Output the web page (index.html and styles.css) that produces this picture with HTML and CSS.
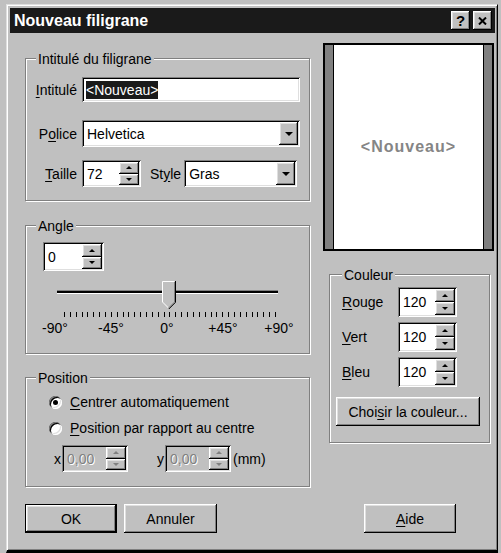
FILE: index.html
```html
<!DOCTYPE html>
<html lang="fr">
<head>
  <meta charset="UTF-8">
  <title>Nouveau filigrane</title>
  <link rel="stylesheet" href="styles.css">
</head>
<body>
  <div class="window">
    <div class="titlebar">
      <span class="title">Nouveau filigrane</span>
      <div class="title-buttons">
        <span class="title-btn raised">?</span>
        <span class="title-btn raised">
          <svg width="9" height="8" viewBox="0 0 9 8"><path d="M1 0.5 L8 7.5 M8 0.5 L1 7.5" stroke="#000" stroke-width="2"/></svg>
        </span>
      </div>
    </div>

    <div class="dialog">
      <div class="col-left">
        <!-- libellé -->
        <div class="group group-label">
          <span class="group-title">Intitulé du filigrane</span>
          <div class="field-row row-name">
            <span class="field-label"><u>I</u>ntitulé</span>
            <div class="edit sunken name-edit"><span class="selected">&lt;Nouveau&gt;</span></div>
          </div>
          <div class="field-row row-font">
            <span class="field-label">P<u>o</u>lice</span>
            <div class="combo sunken font-combo">
              <span class="combo-text">Helvetica</span>
              <span class="combo-btn raised"><span class="arrow-down"></span></span>
            </div>
          </div>
          <div class="field-row row-size">
            <span class="field-label"><u>T</u>aille</span>
            <div class="spin sunken size-spin">
              <span class="spin-text">72</span>
              <span class="spinner">
                <span class="spin-btn raised"><span class="arrow-up"></span></span>
                <span class="spin-btn raised"><span class="arrow-dn"></span></span>
              </span>
            </div>
            <span class="style-label">St<u>y</u>le</span>
            <div class="combo sunken style-combo">
              <span class="combo-text">Gras</span>
              <span class="combo-btn raised"><span class="arrow-down"></span></span>
            </div>
          </div>
        </div>

        <!-- angle -->
        <div class="group group-angle">
          <span class="group-title">Angle</span>
          <div class="spin sunken angle-spin">
            <span class="spin-text">0</span>
            <span class="spinner">
              <span class="spin-btn raised"><span class="arrow-up"></span></span>
              <span class="spin-btn raised"><span class="arrow-dn"></span></span>
            </span>
          </div>
          <div class="slider">
            <div class="track"></div>
            <svg class="thumb" width="14" height="28" viewBox="0 0 14 28">
              <polygon points="0,0 13,0 13,21 6.5,27.5 0,21" fill="#c0c0c0"/>
              <polyline points="0.5,21 0.5,0.5 12.5,0.5" fill="none" stroke="#fff"/>
              <polyline points="0.5,21 6.5,27" fill="none" stroke="#fff"/>
              <polyline points="12.5,1 12.5,21 6.5,27" fill="none" stroke="#808080"/>
              <polyline points="13.5,0 13.5,21.3 6.8,28" fill="none" stroke="#000"/>
            </svg>
          </div>
          <div class="ticks"></div>
          <div class="scale-labels">
            <span>-90°</span><span>-45°</span><span>0°</span><span>+45°</span><span>+90°</span>
          </div>
        </div>

        <!-- position -->
        <div class="group group-position">
          <span class="group-title">Position</span>
          <div class="radio-row first">
            <span class="radio"><span class="dot"></span></span>
            <span class="radio-text"><u>C</u>entrer automatiquement</span>
          </div>
          <div class="radio-row">
            <span class="radio"></span>
            <span class="radio-text"><u>P</u>osition par rapport au centre</span>
          </div>
          <div class="xy-row">
            <span class="axis x-axis">x</span>
            <div class="spin sunken disabled xy-spin">
              <span class="spin-text">0,00</span>
              <span class="spinner">
                <span class="spin-btn raised"><span class="arrow-up"></span></span>
                <span class="spin-btn raised"><span class="arrow-dn"></span></span>
              </span>
            </div>
            <span class="axis y-axis">y</span>
            <div class="spin sunken disabled xy-spin">
              <span class="spin-text">0,00</span>
              <span class="spinner">
                <span class="spin-btn raised"><span class="arrow-up"></span></span>
                <span class="spin-btn raised"><span class="arrow-dn"></span></span>
              </span>
            </div>
            <span class="unit">(mm)</span>
          </div>
        </div>

        <div class="button-row">
          <button class="btn btn-default ok-btn">OK</button>
          <button class="btn cancel-btn">Annuler</button>
        </div>
      </div>

      <div class="col-right">
        <div class="preview">
          <div class="page"><span class="preview-text">&lt;Nouveau&gt;</span></div>
        </div>

        <div class="group group-color">
          <span class="group-title">Couleur</span>
          <div class="color-row first">
            <span class="color-label"><u>R</u>ouge</span>
            <div class="spin sunken color-spin">
              <span class="spin-text">120</span>
              <span class="spinner">
                <span class="spin-btn raised"><span class="arrow-up"></span></span>
                <span class="spin-btn raised"><span class="arrow-dn"></span></span>
              </span>
            </div>
          </div>
          <div class="color-row">
            <span class="color-label"><u>V</u>ert</span>
            <div class="spin sunken color-spin">
              <span class="spin-text">120</span>
              <span class="spinner">
                <span class="spin-btn raised"><span class="arrow-up"></span></span>
                <span class="spin-btn raised"><span class="arrow-dn"></span></span>
              </span>
            </div>
          </div>
          <div class="color-row">
            <span class="color-label"><u>B</u>leu</span>
            <div class="spin sunken color-spin">
              <span class="spin-text">120</span>
              <span class="spinner">
                <span class="spin-btn raised"><span class="arrow-up"></span></span>
                <span class="spin-btn raised"><span class="arrow-dn"></span></span>
              </span>
            </div>
          </div>
          <button class="btn choose-btn">Choi<u>s</u>ir la couleur...</button>
        </div>

        <button class="btn help-btn"><u>A</u>ide</button>
      </div>
    </div>
  </div>
</body>
</html>
```

FILE: styles.css
```css
* {
  margin: 0;
  padding: 0;
  box-sizing: border-box;
}

body {
  width: 501px;
  height: 553px;
  overflow: hidden;
  background: #c0c0c0;
  font-family: "Liberation Sans", Arial, sans-serif;
  font-size: 14px;
  color: #000;
}

u {
  text-decoration: underline;
  text-underline-offset: 2px;
}

/* 3D borders */
.raised {
  background: #c0c0c0;
  box-shadow: inset -1px -1px #000, inset 1px 1px #fff, inset -2px -2px #808080, inset 2px 2px #dfdfdf;
}

.sunken {
  background: #fff;
  box-shadow: inset 1px 1px #808080, inset -1px -1px #fff, inset 2px 2px #000, inset -2px -2px #dfdfdf;
  padding: 2px;
}

/* window frame */
.window {
  margin: 4px 0 0 6px;
  width: 492px;
  height: 549px;
  border: 1px solid;
  border-width: 1px 1px 3px 1px;
  border-color: #dfdfdf #000 #000 #dfdfdf;
  box-shadow: inset 1px 1px #fff, inset -1px -1px #808080;
  padding: 3px 2px 3px 3px;
  display: flex;
  flex-direction: column;
}

.titlebar {
  height: 25px;
  background: #1a1a1a;
  color: #fff;
  display: flex;
  align-items: center;
  justify-content: space-between;
  padding: 0 3px 0 4px;
}

.title {
  font-weight: bold;
  font-size: 16px;
}

.title-buttons {
  display: flex;
  gap: 3px;
}

.title-btn {
  width: 19px;
  height: 19px;
  display: flex;
  align-items: center;
  justify-content: center;
  color: #000;
  font-weight: bold;
  font-size: 15px;
}

.dialog {
  display: flex;
  flex: 1;
  padding-left: 15px;
}

.col-left {
  width: 285px;
  padding-top: 25px;
  display: flex;
  flex-direction: column;
}

.col-right {
  width: 171px;
  margin-left: 13px;
  padding-top: 10px;
  display: flex;
  flex-direction: column;
}

/* group boxes */
.group {
  border: 1px solid #808080;
  box-shadow: inset 1px 1px #fff, 1px 1px #fff;
  display: flex;
  flex-direction: column;
}

.group-title {
  align-self: flex-start;
  margin: -8px 0 -8px 10px;
  padding: 0 2px;
  line-height: 16px;
  background: #c0c0c0;
}

.field-row {
  display: flex;
  align-items: center;
}

.field-label {
  width: 51px;
  margin-right: 5px;
  text-align: right;
}

.group-label {
  height: 143px;
}

.row-name {
  margin-top: 18px;
}

.row-font {
  margin-top: 18px;
}

.row-size {
  margin-top: 13px;
}

.edit {
  display: flex;
  align-items: center;
  padding-left: 4px;
}

.name-edit {
  width: 218px;
  height: 25px;
}

.selected {
  background: #1a1a1a;
  color: #fff;
  line-height: 18px;
}

.combo {
  display: flex;
}

.combo-text {
  flex: 1;
  display: flex;
  align-items: center;
  padding-left: 3px;
}

.combo-btn {
  width: 19px;
  display: flex;
  align-items: center;
  justify-content: center;
}

.font-combo {
  width: 218px;
  height: 27px;
}

.style-combo {
  width: 113px;
  height: 27px;
}

.style-label {
  margin: 0 3px 0 9px;
}

.arrow-down {
  border-left: 4px solid transparent;
  border-right: 4px solid transparent;
  border-top: 4px solid #000;
}

/* spin boxes */
.spin {
  display: flex;
}

.spin-text {
  flex: 1;
  display: flex;
  align-items: center;
  padding-left: 3px;
}

.spinner {
  width: 20px;
  display: flex;
  flex-direction: column;
}

.spin-btn {
  flex: 1;
  display: flex;
  align-items: center;
  justify-content: center;
}

.arrow-up {
  border-left: 3px solid transparent;
  border-right: 3px solid transparent;
  border-bottom: 3px solid #000;
}

.arrow-dn {
  border-left: 3px solid transparent;
  border-right: 3px solid transparent;
  border-top: 3px solid #000;
}

.size-spin {
  width: 59px;
  height: 27px;
}

/* angle */
.group-angle {
  margin-top: 24px;
  height: 129px;
}

.angle-spin {
  margin: 16px 0 0 17px;
  width: 61px;
  height: 29px;
}

.slider {
  position: relative;
  margin: 10px 0 0 31px;
  width: 221px;
  height: 28px;
}

.track {
  margin-top: 9px;
  height: 4px;
  background: #000;
  border-top: 1px solid #808080;
  border-bottom: 1px solid #fff;
}

.thumb {
  position: absolute;
  left: 105px;
  top: 0;
}

.ticks {
  margin: 3px 0 0 38px;
  width: 212px;
  height: 5px;
  background: repeating-linear-gradient(90deg, #000 0 1px, transparent 1px 5.86px);
}

.scale-labels {
  display: grid;
  grid-template-columns: repeat(5, 56px);
  margin: 3px 0 0 1px;
  line-height: 16px;
  text-align: center;
}

/* position */
.group-position {
  margin-top: 23px;
  height: 110px;
}

.radio-row {
  display: flex;
  align-items: center;
  height: 16px;
  margin-top: 10px;
  padding-left: 23px;
}

.radio-row.first {
  margin-top: 16px;
}

.radio {
  width: 13px;
  height: 13px;
  border-radius: 50%;
  background: #fff;
  box-shadow: inset 1px 1px #808080, inset -1px -1px #fff, inset 2px 2px #000, inset -2px -2px #dfdfdf;
  display: flex;
  align-items: center;
  justify-content: center;
}

.dot {
  width: 5px;
  height: 5px;
  border-radius: 50%;
  background: #000;
}

.radio-text {
  margin-left: 8px;
}

.xy-row {
  display: flex;
  align-items: center;
  margin-top: 9px;
}

.x-axis {
  margin-left: 28px;
  width: 8px;
}

.y-axis {
  margin-left: 29px;
  width: 8px;
}

.xy-spin {
  width: 66px;
  height: 27px;
}

.spin.disabled {
  background: #c0c0c0;
}

.disabled .spin-text {
  color: #808080;
  text-shadow: 1px 1px #fff;
}

.disabled .arrow-up {
  border-bottom-color: #808080;
}

.disabled .arrow-dn {
  border-top-color: #808080;
}

.unit {
  margin-left: 2px;
}

/* buttons */
.btn {
  font: inherit;
  color: #000;
  border: none;
  background: #c0c0c0;
  box-shadow: inset -1px -1px #000, inset 1px 1px #fff, inset -2px -2px #808080, inset 2px 2px #dfdfdf;
  height: 29px;
}

.btn-default {
  box-shadow: inset 0 0 0 1px #000, inset -2px -2px #000, inset 2px 2px #fff, inset -3px -3px #808080, inset 3px 3px #dfdfdf;
}

.button-row {
  display: flex;
  margin-top: 17px;
}

.ok-btn {
  width: 92px;
}

.cancel-btn {
  width: 93px;
  margin-left: 7px;
}

/* preview */
.preview {
  height: 208px;
  border: 2px solid #000;
  background: #808080;
  padding: 0 8px;
}

.page {
  height: 100%;
  background: #fff;
  border-left: 1px solid #000;
  border-right: 1px solid #000;
  display: flex;
  align-items: center;
  justify-content: center;
}

.preview-text {
  color: #858585;
  font-weight: bold;
  font-size: 16px;
  letter-spacing: 1px;
}

/* couleur */
.group-color {
  margin: 23px 4px 0 6px;
  height: 169px;
  padding-left: 12px;
}

.group-color .group-title {
  margin-left: 0;
}

.color-row {
  display: flex;
  align-items: center;
  margin-top: 5px;
}

.color-row.first {
  margin-top: 12px;
}

.color-label {
  width: 56px;
}

.color-spin {
  width: 59px;
  height: 30px;
}

.choose-btn {
  margin: 10px 0 0 -6px;
  width: 144px;
}

.help-btn {
  margin: 61px 0 0 41px;
  width: 92px;
}
```
